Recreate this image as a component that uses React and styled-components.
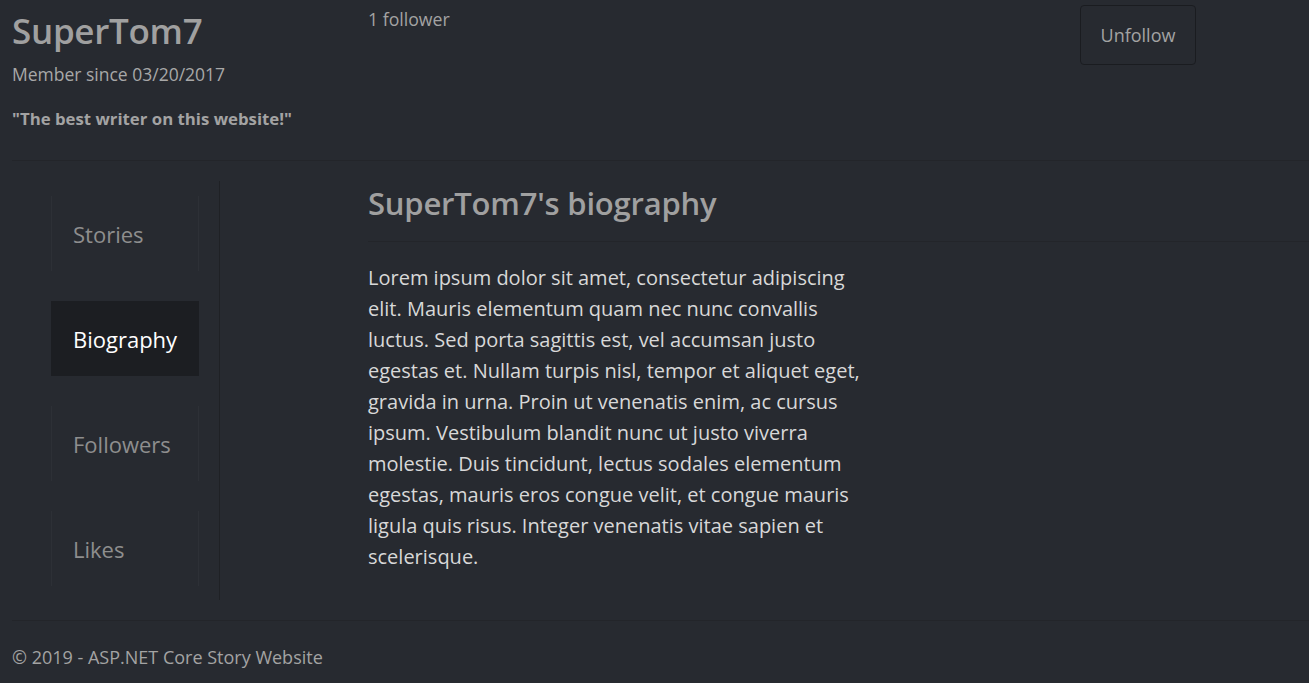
import React from "react";
import styled, { createGlobalStyle } from "styled-components";

const Global = createGlobalStyle`
  html, body { margin: 0; padding: 0; background: #272a30; }
  body { font-family: "Open Sans", "Noto Sans", sans-serif; color: #a3a3a3; }
  * { box-sizing: border-box; }
`;

const Page = styled.div`
  min-height: 683px;
  padding: 0 0 0 12px;
  background: #272a30;
`;

const Header = styled.div`
  display: grid;
  grid-template-columns: 356px 712px 116px;
  padding-top: 4px;
  height: 161px;
  border-bottom: 1px solid #23252a;
`;

const Name = styled.h1`
  margin: 0;
  font-size: 35px;
  font-weight: 600;
  color: #a0a0a0;
  line-height: 54px;
  letter-spacing: -0.3px;
`;

const Meta = styled.div`
  font-size: 17.5px;
  line-height: 24px;
  color: #a8a8a8;
  margin-top: 4px;
`;

const Quote = styled.div`
  font-size: 16.8px;
  line-height: 23px;
  font-weight: 700;
  color: #a3a3a3;
  margin-top: 21px;
`;

const Followers = styled.div`
  font-size: 17.7px;
  line-height: 24px;
  color: #a3a3a3;
  padding-top: 3px;
`;

const Button = styled.button`
  height: 60px;
  width: 116px;
  margin-top: 1px;
  background: transparent;
  border: 1px solid #1a1c20;
  border-radius: 4px;
  color: #a3a3a3;
  font-family: inherit;
  font-size: 18px;
`;

const Body = styled.div`
  display: grid;
  grid-template-columns: 208px 148px 1fr;
  padding-top: 20px;
  height: 460px;
  border-bottom: 1px solid #23252a;
`;

const Nav = styled.nav`
  display: flex;
  flex-direction: column;
  gap: 30px;
  padding: 15px 0 0 39px;
  height: 419px;
  border-right: 1px solid #1f2125;
`;

const NavItem = styled.div`
  height: 75px;
  width: 148px;
  display: flex;
  align-items: center;
  padding-left: 21px;
  font-size: 22px;
  color: ${(p) => (p.$active ? "#ffffff" : "#8e8e8e")};
  background: ${(p) => (p.$active ? "#1c1e22" : "transparent")};
  border-left: 1px solid ${(p) => (p.$active ? "#1c1e22" : "#2d3036")};
  border-right: 1px solid ${(p) => (p.$active ? "#1c1e22" : "#2d3036")};
`;

const Content = styled.div`
  grid-column: 3;
`;

const Title = styled.h2`
  margin: 0;
  padding: 0 0 16px;
  font-size: 31px;
  font-weight: 600;
  color: #a0a0a0;
  line-height: 44px;
  border-bottom: 1px solid #23252a;
  letter-spacing: -0.2px;
`;

const Bio = styled.p`
  margin: 20px 0 0;
  width: 500px;
  font-size: 20px;
  line-height: 31px;
  color: #d8d8d8;
`;

const Footer = styled.footer`
  padding-top: 24px;
  font-size: 18px;
  color: #a3a3a3;
`;

export default function App() {
  return (
    <Page>
      <Global />
      <Header>
        <div>
          <Name>SuperTom7</Name>
          <Meta>Member since 03/20/2017</Meta>
          <Quote>"The best writer on this website!"</Quote>
        </div>
        <Followers>1 follower</Followers>
        <div>
          <Button>Unfollow</Button>
        </div>
      </Header>
      <Body>
        <Nav>
          <NavItem>Stories</NavItem>
          <NavItem $active>Biography</NavItem>
          <NavItem>Followers</NavItem>
          <NavItem>Likes</NavItem>
        </Nav>
        <Content>
          <Title>SuperTom7's biography</Title>
          <Bio>
            Lorem ipsum dolor sit amet, consectetur adipiscing elit. Mauris elementum quam nec nunc convallis
            luctus. Sed porta sagittis est, vel accumsan justo egestas et. Nullam turpis nisl, tempor et aliquet
            eget, gravida in urna. Proin ut venenatis enim, ac cursus ipsum. Vestibulum blandit nunc ut justo
            viverra molestie. Duis tincidunt, lectus sodales elementum egestas, mauris eros congue velit, et
            congue mauris ligula quis risus. Integer venenatis vitae sapien et scelerisque.
          </Bio>
        </Content>
      </Body>
      <Footer>© 2019 - ASP.NET Core Story Website</Footer>
    </Page>
  );
}
